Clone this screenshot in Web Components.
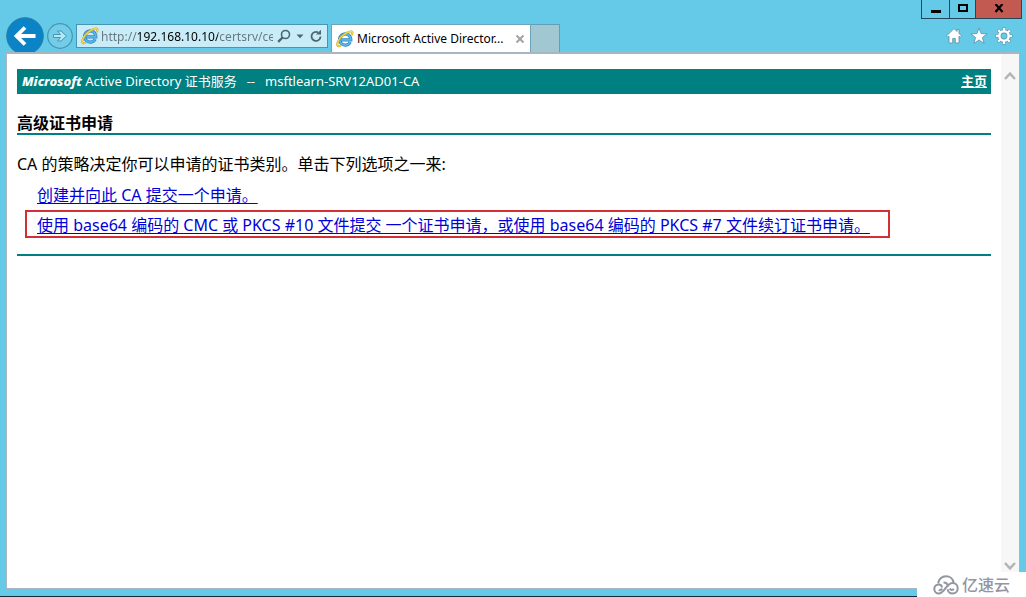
<!DOCTYPE html>
<html lang="zh-CN">
<head>
<meta charset="utf-8">
<title>Microsoft Active Directory 证书服务</title>
<style>
  body { margin: 0; font-family: "Noto Sans", "Noto Sans CJK SC", sans-serif; }
</style>
</head>
<body>
<browser-window>
  <nav-bar slot="bar" address="http://192.168.10.10/certsrv/certrqad.asp"></nav-bar>
  <browser-tab slot="bar">Microsoft Active Director...</browser-tab>
  <window-tools slot="bar"></window-tools>
  <cert-page>
    <cert-banner slot="banner" authority="msftlearn-SRV12AD01-CA">主页</cert-banner>
    <span slot="title">高级证书申请</span>
    <span slot="intro">CA 的策略决定你可以申请的证书类别。单击下列选项之一来:</span>
    <option-link slot="options">创建并向此 CA 提交一个申请。</option-link>
    <option-link slot="options" marked>使用 base64 编码的 CMC 或 PKCS #10 文件提交 一个证书申请，或使用 base64 编码的 PKCS #7 文件续订证书申请。</option-link>
  </cert-page>
  <site-mark slot="mark">亿速云</site-mark>
</browser-window>

<script>
const define = (name, html, setup) => {
  customElements.define(name, class extends HTMLElement {
    constructor() {
      super();
      this.attachShadow({ mode: "open" }).innerHTML = html;
    }
    connectedCallback() { if (setup) setup(this, this.shadowRoot); }
  });
};

define("ie-logo", `
<style>
  :host { display: block; flex: none; width: 18px; height: 18px; }
  svg { display: block; width: 100%; height: 100%; }
</style>
<svg viewBox="0 0 18 18" fill="none" aria-hidden="true">
  <path d="M14.2 12.1A5.6 5.6 0 1 1 14.8 9.8H5.3" stroke="#2f86c4" stroke-width="3.2"/>
  <path d="M14.2 12.1A5.6 5.6 0 1 1 14.8 9.8H5.3" stroke="#59b6e8" stroke-width="1.8"/>
  <path d="M15.4 5.2C17.3 2.5 16.5.8 13.6 1.6 9.8 2.6 4.400 6.800 2.200 11.200.3 15 1.300 17.300 4.900 15.600" stroke="#c99a1c" stroke-width="2"/>
  <path d="M15.4 5.2C17.3 2.5 16.5.8 13.6 1.6 9.8 2.6 4.400 6.800 2.200 11.200.3 15 1.300 17.300 4.900 15.600" stroke="#f7d94c" stroke-width="1.2"/>
</svg>`);

define("browser-window", `
<style>
  :host { display: flex; flex-direction: column; min-height: 100vh; box-sizing: border-box;
    position: relative; background: #64cae8; border-bottom: 1px solid #17283a; padding: 0 6px 7px; }
  header { display: flex; align-items: flex-start; height: 52px; }
  main { flex: 1; display: flex; background: #fff; border: 1px solid #a9b5bf; border-top-width: 2px; }
  .page { flex: 1; min-width: 0; }
  .scroll { width: 18px; background: #f7f7f7; display: flex; flex-direction: column; justify-content: space-between;
    align-items: center; padding: 14px 0; box-sizing: border-box; }
  .scroll button { border: 0; padding: 0; background: none; width: 16px; height: 16px; display: grid; place-items: center; }
  ::slotted(site-mark) { position: absolute; right: 0; bottom: -1px; }
</style>
<header><slot name="bar"></slot></header>
<main>
  <div class="page"><slot></slot></div>
  <div class="scroll">
    <button aria-label="向上滚动"><svg width="12" height="10" viewBox="0 0 12 10" fill="none" stroke="#b4b4b4" stroke-width="2.4"><path d="M1 8l5-5.4L11 8"/></svg></button>
    <button aria-label="向下滚动"><svg width="12" height="10" viewBox="0 0 12 10" fill="none" stroke="#b4b4b4" stroke-width="2.4"><path d="M1 2l5 5.4L11 2"/></svg></button>
  </div>
</main>
<slot name="mark"></slot>`);

define("nav-bar", `
<style>
  :host { display: flex; align-items: center; gap: 3px; margin-top: 17px; }
  button { border: 0; padding: 0; background: none; display: block; flex: none; }
  svg { display: block; }
  form { display: flex; align-items: center; box-sizing: border-box; width: 252px; height: 24px; padding: 0 4px;
    border: 1px solid #4795b2; background: #c9edf8; }
  input { flex: 1; min-width: 0; border: 0; padding: 0; margin: 0 4px 0 2px; outline: 0; height: 20px;
    font: 12px "Noto Sans", sans-serif; -webkit-text-fill-color: transparent;
    background: linear-gradient(90deg, #66777f 37px, #000 37px 117px, #66777f 117px); -webkit-background-clip: text; background-clip: text; }
  .tools { display: flex; align-items: center; gap: 5px; }
</style>
<button aria-label="后退"><svg width="38" height="38" viewBox="0 0 38 38"><circle cx="19" cy="19" r="18.3" fill="#0a84c6" stroke="#2b7da5"/><path d="M29.5 19H11M19 10.5L10.5 19l8.500 8.500" fill="none" stroke="#fff" stroke-width="3.800"/></svg></button>
<button aria-label="前进"><svg width="26" height="26" viewBox="0 0 26 26"><circle cx="13" cy="13" r="12.300" fill="#73cde9" stroke="#4795b2" stroke-width="1.200"/><path d="M6.500 11.500h7l-3-3.500h3.500l5.500 5-5.500 5h-3.500l3-3.500h-7z" fill="#b5e8f6" stroke="#4795b2"/></svg></button>
<form>
  <ie-logo></ie-logo>
  <input aria-label="地址" spellcheck="false">
  <div class="tools">
    <button type="button" aria-label="搜索"><svg width="14" height="14" viewBox="0 0 14 14" fill="none" stroke="#4d6670"><circle cx="8.500" cy="5.500" r="4" stroke-width="1.600"/><path d="M5.500 8.500L1.200 12.800" stroke-width="2.400"/></svg></button>
    <button type="button" aria-label="历史"><svg width="8" height="5" viewBox="0 0 8 5"><path d="M.5.5h7L4 4.200z" fill="#4d6670"/></svg></button>
    <button type="button" aria-label="刷新"><svg width="14" height="14" viewBox="0 0 14 14" fill="none" stroke="#4d6670"><path d="M11.500 7.500A4.500 4.500 0 1 1 9 3.400" stroke-width="1.800"/><path d="M7 5.500h5V.8z" fill="#4d6670" stroke="none"/></svg></button>
  </div>
</form>`, (el, root) => {
  root.querySelector("input").value = el.getAttribute("address");
});

define("browser-tab", `
<style>
  :host { display: flex; margin: 24px 0 0 3px; font-size: 12px; line-height: 16px; }
  .tab { display: flex; align-items: center; gap: 3px; box-sizing: border-box; width: 200px; height: 28px; padding: 0 5px 0 4px;
    background: #fff; border: 1px solid #6fa3b8; border-bottom: 0; }
  .title { flex: 1; white-space: nowrap; overflow: hidden; }
  button { border: 0; padding: 0; background: none; display: block; }
  svg { display: block; }
  .new { width: 29px; height: 28px; background: #a1c7d3; border: 1px solid #5f9fb8; border-width: 1px 1px 0 0; box-sizing: border-box; }
</style>
<div class="tab"><ie-logo></ie-logo><span class="title"><slot></slot></span>
<button aria-label="关闭选项卡"><svg width="10" height="10" viewBox="0 0 10 10" stroke="#a3a3a3" stroke-width="2"><path d="M1.500 1.500l7 7M8.500 1.500l-7 7"/></svg></button></div>
<button class="new" aria-label="新建选项卡"></button>`);

define("window-tools", `
<style>
  :host { display: flex; flex-direction: column; align-items: flex-end; gap: 8px; margin-left: auto; margin-right: -2px; }
  button { padding: 0; background: none; border: 0; display: block; }
  svg { display: block; }
  .controls { display: flex; border: 1px solid #20475a; border-top: 0; height: 18px; }
  .controls button { width: 27px; display: grid; place-items: center; }
  .controls button + button { border-left: 1px solid #20475a; width: 26px; }
  .controls button.close { width: 46px; background: #c25a52; }
  .icons { display: flex; gap: 7px; padding-right: 9px; }
</style>
<div class="controls">
  <button aria-label="最小化"><svg width="10" height="10"><path d="M0 6h10v3H0z"/></svg></button>
  <button aria-label="最大化"><svg width="10" height="10"><path d="M1 1h8v6H1z" fill="none" stroke="#000" stroke-width="2"/></svg></button>
  <button class="close" aria-label="关闭"><svg width="10" height="10" viewBox="0 0 10 10" stroke="#000" stroke-width="2.200"><path d="M1.500 0l7 8M8.500 0l-7 8"/></svg></button>
</div>
<div class="icons">
  <button aria-label="主页"><svg width="18" height="18" viewBox="0 0 18 18"><path d="M9 1.500L1.500 9l1.200 1.200L4 9.200V16h3.700v-4.500h2.600V16H14V9.200l1.300 1L16.500 9 14 6.500v-4h-2v2z" fill="#fff" stroke="#5b8da3" stroke-width=".8"/></svg></button>
  <button aria-label="收藏夹"><svg width="18" height="18" viewBox="0 0 18 18"><path d="M9 1l2.100 5.600 6 .2-4.700 3.700 1.700 5.900L9 13l-5.100 3.400 1.700-5.900L.9 6.800l6-.2z" fill="#fff" stroke="#5b8da3" stroke-width=".8"/></svg></button>
  <button aria-label="工具"><svg width="18" height="18" viewBox="0 0 18 18" fill="none"><circle cx="9" cy="9" r="6.800" stroke="#5b8da3" stroke-width="3.600" stroke-dasharray="3 2.340" stroke-dashoffset="1.500"/><circle cx="9" cy="9" r="4.700" stroke="#5b8da3" stroke-width="3.800"/><circle cx="9" cy="9" r="6.800" stroke="#fff" stroke-width="2.600" stroke-dasharray="2.200 3.140" stroke-dashoffset="1.100"/><circle cx="9" cy="9" r="4.700" stroke="#fff" stroke-width="2.600"/></svg></button>
</div>`);

define("cert-page", `
<style>
  :host { display: block; padding: 15px 10px; font-size: 16px; line-height: 22px; color: #000; }
  h1 { margin: 20px 0 18px; font-size: 16px; line-height: 19px; font-weight: 700; border-bottom: 2px solid #008080; }
  p { margin: 0; }
  .options { display: flex; flex-direction: column; align-items: flex-start; gap: 2px; margin: 5px 0 0 8px; }
  hr { border: 0; height: 2px; margin: 16px 0 0; background: #008080; }
</style>
<slot name="banner"></slot>
<h1><slot name="title"></slot></h1>
<p><slot name="intro"></slot></p>
<div class="options"><slot name="options"></slot></div>
<hr>`);

define("cert-banner", `
<style>
  :host { display: flex; justify-content: space-between; align-items: center; box-sizing: border-box; height: 25px; padding: 0 4px 2px 5px;
    background: #008080; color: #fff; font-size: 13px; line-height: 18px; }
  div { display: flex; gap: 10px; white-space: nowrap; }
  b { font-weight: 800; font-style: italic; }
  a { color: inherit; font-weight: 700; }
</style>
<div><span><b>Microsoft</b> Active Directory 证书服务</span><span>--</span><span class="authority"></span></div>
<a href="#home"><slot></slot></a>`, (el, root) => {
  root.querySelector(".authority").textContent = el.getAttribute("authority");
});

define("option-link", `
<style>
  :host { display: block; box-sizing: border-box; border: 2px solid transparent; padding: 1px 18px 0 10px; height: 28px; line-height: 24px; white-space: nowrap; }
  :host([marked]) { border-color: #d32f35; }
  a { color: #0000d8; text-underline-offset: 2px; text-decoration-skip-ink: none; }
</style>
<a href="#request"><slot></slot></a>`);

define("site-mark", `
<style>
  :host { display: flex; align-items: center; justify-content: center; gap: 3px; box-sizing: border-box; width: 109px; height: 25px;
    background: #fff; color: #93959f; font-size: 16px; line-height: 24px; font-weight: 500; }
  svg { display: block; }
</style>
<svg width="26" height="20" viewBox="0 0 26 20" fill="none" stroke="#93959f" stroke-width="2"><path d="M5.200 8.200C5.500 4 9 1.300 13 1.300c4 0 7 2.700 7.500 6.200M9 12.500c-.2-2-1.700-3-3.300-3C3.200 9.500 1.300 11.300 1.300 14c0 2.700 2 4.500 4.700 4.500 5.500 0 7.500-10.500 13.500-10.500 3 0 5.200 2.200 5.200 5.200s-2.200 5.300-5.200 5.300c-2.800 0-4.700-2-4.700-4.200M10.500 7.500c3 0 4.300 2 4.300 4.200M5.800 14.800c1 .8 2.500.2 3.200-1.300M16.800 13.500c.8 1.800 3.200 1.800 4 .3"/></svg>
<slot></slot>`);
</script>
</body>
</html>
